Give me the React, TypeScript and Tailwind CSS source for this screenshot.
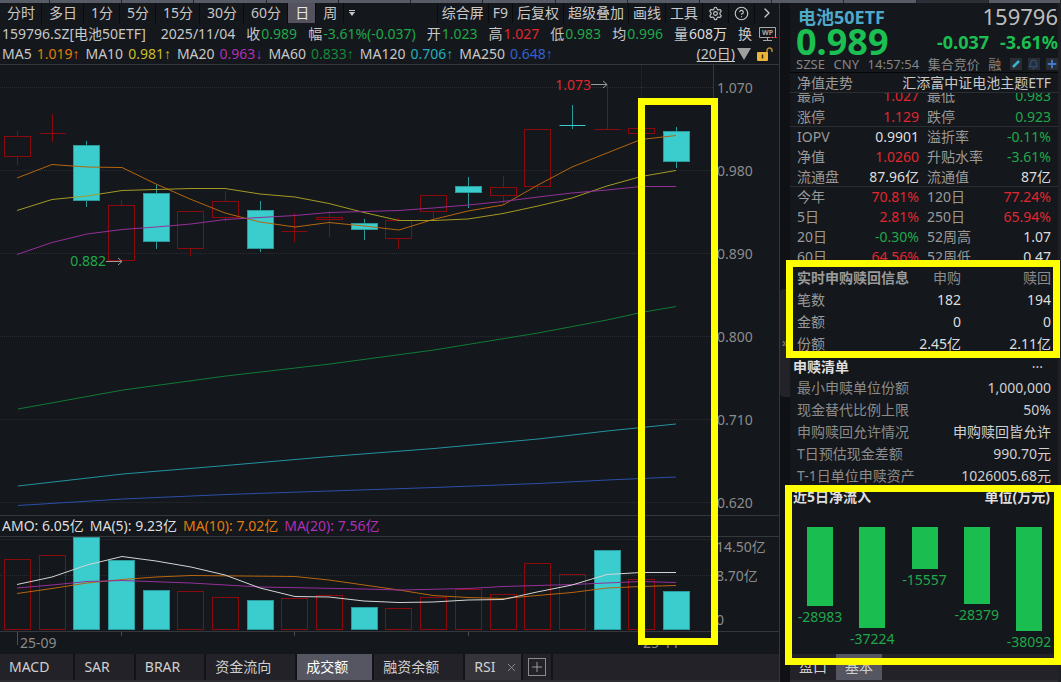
import { useState } from 'react';
import { Bell, ChevronRight, CircleHelp, Plus, Settings, X } from 'lucide-react';

type Candle = { up: boolean; top: number; bottom: number; high: number; low: number; vol: number };

const periods = ['分时', '多日', '1分', '5分', '15分', '30分', '60分', '日', '周'];
const tools = ['综合屏', 'F9', '后复权', '超级叠加', '画线', '工具'];
const indicators = ['MACD', 'SAR', 'BRAR', '资金流向', '成交额', '融资余额'];

const GREEN = 'text-[#1fa84a]';
const RED = 'text-[#e0262f]';
const WHITE = 'text-[#dedede]';

const quotes = [
  { label: '收', value: '0.989', color: GREEN },
  { label: '幅', value: '-3.61%(-0.037)', color: GREEN },
  { label: '开', value: '1.023', color: GREEN },
  { label: '高', value: '1.027', color: RED },
  { label: '低', value: '0.983', color: GREEN },
  { label: '均', value: '0.996', color: GREEN },
  { label: '量', value: '608万', color: WHITE },
];

const averages = [
  { label: 'MA5', value: '1.019', arrow: '↑', color: 'text-[#e07c0c]' },
  { label: 'MA10', value: '0.981', arrow: '↑', color: 'text-[#c9bd26]' },
  { label: 'MA20', value: '0.963', arrow: '↓', color: 'text-[#b02fb5]' },
  { label: 'MA60', value: '0.833', arrow: '↑', color: 'text-[#118a3c]' },
  { label: 'MA120', value: '0.706', arrow: '↑', color: 'text-[#22adbd]' },
  { label: 'MA250', value: '0.648', arrow: '↑', color: 'text-[#3560cf]' },
];

const candles: Candle[] = [
  { up: true, top: 136, bottom: 156, high: 131, low: 164, vol: 559 },
  { up: true, top: 133, bottom: 133, high: 114, low: 141, vol: 555 },
  { up: false, top: 145, bottom: 200, high: 141, low: 206, vol: 537 },
  { up: true, top: 205, bottom: 260, high: 200, low: 260, vol: 560 },
  { up: false, top: 193, bottom: 241, high: 185, low: 248, vol: 590 },
  { up: true, top: 211, bottom: 248, high: 211, low: 255, vol: 591 },
  { up: true, top: 201, bottom: 217, high: 191, low: 221, vol: 597 },
  { up: false, top: 210, bottom: 248, high: 201, low: 251, vol: 600 },
  { up: true, top: 231, bottom: 231, high: 213, low: 241, vol: 598 },
  { up: true, top: 217, bottom: 219, high: 211, low: 236, vol: 595 },
  { up: false, top: 223, bottom: 229, high: 219, low: 239, vol: 607 },
  { up: true, top: 220, bottom: 238, high: 218, low: 248, vol: 608 },
  { up: true, top: 195, bottom: 211, high: 195, low: 219, vol: 597 },
  { up: false, top: 186, bottom: 192, high: 177, low: 207, vol: 589 },
  { up: true, top: 187, bottom: 195, high: 176, low: 203, vol: 594 },
  { up: true, top: 129, bottom: 186, high: 129, low: 189, vol: 563 },
  { up: false, top: 125, bottom: 125, high: 105, low: 128, vol: 574 },
  { up: true, top: 129, bottom: 129, high: 84, low: 129, vol: 550 },
  { up: true, top: 128, bottom: 133, high: 128, low: 133, vol: 579 },
  { up: false, top: 131, bottom: 161, high: 127, low: 167, vol: 591 },
];

// turnover bars take their own colour, it differs from the candle on some days
const filledVolume = [2, 3, 4, 7, 10, 17, 19];

const priceLines = [
  { color: '#b5660f', points: '17,178 52,164.5 87,167 122,167.5 156,184 190,199 225,213 260,222 295,227 329,222.5 364,226 399,230 433,219.5 468,211 503,205 538,185 572,167 607,153 641,139.5 676,135.5' },
  { color: '#a39a24', points: '17,210.5 52,199.5 87,196 122,190.5 156,189.5 191,188.5 225,188.5 260,194 295,197 329,203.5 364,212.5 399,220.5 433,220.5 468,219 503,213.5 538,206 572,198 607,186 641,176.5 676,170.5' },
  { color: '#94309a', points: '17,254.5 52,242.5 87,234 122,229.5 156,227 191,224 225,219.5 260,217.5 295,215.5 329,212.5 364,211.5 399,210.5 433,208 468,205 503,201.5 538,197 572,193 607,190 641,186.5 676,186.5' },
  { color: '#107a36', points: '18,409 123,390 226,376 330,364 434,350 538,333 607,320 641,312.5 676,306.5' },
  { color: '#2393a0', points: '18,486 123,474 226,465.5 330,456.5 434,448.5 538,439 607,431 676,424' },
  { color: '#2b4fa8', points: '18,505.5 123,499 226,494.5 330,491 434,487.5 538,483.5 607,480 676,477' },
];

const volumeLines = [
  { color: '#b5660f', points: '17,593.5 52,588.5 87,583 122,579.5 156,577 191,575.5 295,576.5 329,580 364,585 399,590 433,595.5 468,597.5 503,598.5 537,595.5 572,592.5 607,588 641,586.5 676,585.5' },
  { color: '#94309a', points: '17,588 52,585 87,581.5 122,580.5 191,583 260,587 364,589 399,590 468,588.5 503,586.5 572,584.5 641,581.5 676,582.5' },
  { color: '#d4d4d4', points: '17,584.5 52,577 87,565 122,556.5 156,561 191,567 225,575 260,588 295,596.5 329,597 364,601 399,602.5 433,602 468,600 503,599.5 537,592 572,585 607,574.5 641,572.5 676,572.5' },
];

const priceTicks = [
  { y: 88, text: '1.070' },
  { y: 171, text: '0.980' },
  { y: 254, text: '0.890' },
  { y: 337, text: '0.800' },
  { y: 420, text: '0.710' },
  { y: 503, text: '0.620' },
];

const stats = [
  { cells: ['最高', '1.027', '最低', '0.983'], a: RED, b: GREEN, line: false },
  { cells: ['涨停', '1.129', '跌停', '0.923'], a: RED, b: GREEN, line: true },
  { cells: ['IOPV', '0.9901', '溢折率', '-0.11%'], a: WHITE, b: GREEN, line: false },
  { cells: ['净值', '1.0260', '升贴水率', '-3.61%'], a: RED, b: GREEN, line: false },
  { cells: ['流通盘', '87.96亿', '流通值', '87亿'], a: WHITE, b: WHITE, line: true },
  { cells: ['今年', '70.81%', '120日', '77.24%'], a: RED, b: RED, line: false },
  { cells: ['5日', '2.81%', '250日', '65.94%'], a: RED, b: RED, line: false },
  { cells: ['20日', '-0.30%', '52周高', '1.07'], a: GREEN, b: WHITE, line: false },
  { cells: ['60日', '64.56%', '52周低', '0.47'], a: RED, b: WHITE, line: false },
];

const redemption = [
  ['笔数', '182', '194'],
  ['金额', '0', '0'],
  ['份额', '2.45亿', '2.11亿'],
];

const basket = [
  ['最小申赎单位份额', '1,000,000'],
  ['现金替代比例上限', '50%'],
  ['申购赎回允许情况', '申购赎回皆允许'],
  ['T日预估现金差额', '990.70元'],
  ['T-1日单位申赎资产', '1026005.68元'],
];

const flows = [-28983, -37224, -15557, -28379, -38092];
const maxFlow = Math.max(...flows.map(Math.abs));

const centerX = (i: number) => Math.round(17 + i * 34.68) + 0.5;

function Highlight({ className }: { className: string }) {
  return <div className={`absolute z-10 border-[7px] border-[#ffff00] pointer-events-none ${className}`} />;
}

function WindowStrip() {
  return (
    <div className="flex h-[3px] bg-[#565b66]">
      <span className="w-[50px] border-r border-[#22252a]" />
      {Array.from({ length: 14 }, (_, i) => (
        <span key={i} className={`flex-1 border-r border-[#22252a] ${i === 12 ? 'bg-[#2b2e34]' : ''}`} />
      ))}
    </div>
  );
}

function PriceChart() {
  return (
    <svg viewBox="0 65 779 450" className="block w-full" fontSize="14">
      {priceTicks.map(tick => (
        <g key={tick.text}>
          <line x1="0" x2="713" y1={tick.y - 0.5} y2={tick.y - 0.5} stroke="#292c30" strokeDasharray="1 1" />
          <text x="717" y={tick.y + 5} fill="#8b8b8b">{tick.text}</text>
        </g>
      ))}
      <line x1="641.5" x2="641.5" y1="65" y2="515" stroke="#292c30" strokeDasharray="1 1" />
      <line x1="713.5" x2="713.5" y1="65" y2="515" stroke="#34373c" />
      {candles.map((c, i) => {
        const x = centerX(i);
        const stroke = c.up ? '#8c0a0e' : '#2a9a9c';
        return (
          <g key={i} stroke={stroke} fill={c.up ? 'none' : '#3bcccd'}>
            <line x1={x} x2={x} y1={c.high} y2={c.top} />
            <line x1={x} x2={x} y1={c.bottom} y2={c.low + 1} />
            {c.top === c.bottom ? (
              <line x1={x - 13} x2={x + 13} y1={c.top + 0.5} y2={c.top + 0.5} stroke={c.up ? stroke : '#3bcccd'} />
            ) : (
              <rect x={x - 13} y={c.top + 0.5} width="26" height={c.bottom - c.top} />
            )}
          </g>
        );
      })}
      {priceLines.map(line => (
        <polyline key={line.color} points={line.points} fill="none" stroke={line.color} />
      ))}
      <text x="591" y="90" textAnchor="end" fill="#e0262f">1.073</text>
      <path d="M591 84.5h16m-4-3.5 4 3.5-4 3.5" fill="none" stroke="#9a9a9a" />
      <text x="106" y="266" textAnchor="end" fill="#1fa84a">0.882</text>
      <path d="M106 261.5h16m-4-3.5 4 3.5-4 3.5" fill="none" stroke="#9a9a9a" />
    </svg>
  );
}

function VolumeChart() {
  return (
    <svg viewBox="0 537 779 117" className="block w-full" fontSize="14">
      <line x1="0" x2="713" y1="539.5" y2="539.5" stroke="#292c30" strokeDasharray="1 1" />
      <line x1="0" x2="713" y1="575.5" y2="575.5" stroke="#292c30" strokeDasharray="1 1" />
      <line x1="713.5" x2="713.5" y1="537" y2="631" stroke="#34373c" />
      {candles.map((c, i) => {
        const filled = filledVolume.includes(i);
        return (
          <rect
            key={i}
            x={centerX(i) - 13}
            y={c.vol + 0.5}
            width="26"
            height={629 - c.vol}
            fill={filled ? '#3bcccd' : 'none'}
            stroke={filled ? '#2a9a9c' : '#8c0a0e'}
          />
        );
      })}
      {volumeLines.map(line => (
        <polyline key={line.color} points={line.points} fill="none" stroke={line.color} />
      ))}
      <line x1="0" x2="779" y1="631.5" y2="631.5" stroke="#34373c" />
      <path d="M17.5 632v13M121.5 632v4M294.5 632v4M468.5 632v4M641.5 632v13" stroke="#4a4d52" />
      <g fill="#8b8b8b">
        <text x="716" y="552">14.50亿</text>
        <text x="716" y="581">8.70亿</text>
        <text x="716" y="625">0</text>
        <text x="20" y="648">25-09</text>
        <text x="643" y="648">25-11</text>
      </g>
    </svg>
  );
}

export default function App() {
  const [period, setPeriod] = useState('日');
  const [indicator, setIndicator] = useState('成交额');
  const [sideTab, setSideTab] = useState('基本');

  return (
    <div className="min-h-screen flex flex-col bg-[#14171b] text-sm text-[#c8c8c8] whitespace-nowrap overflow-hidden font-['Noto_Sans','Noto_Sans_CJK_SC',sans-serif]">
      <WindowStrip />
      <div className="flex flex-1">
        <main className="flex-1 min-w-0 flex flex-col">
          <div className="flex h-5 leading-5">
            {periods.map(p => (
              <button
                key={p}
                onClick={() => setPeriod(p)}
                className={`pl-[7px] pr-[6px] border-r border-[#090b0d] cursor-pointer ${period === p ? 'bg-[#53525e] text-[#e6e6e6]' : 'hover:bg-[#25272d]'}`}
              >
                {p}
              </button>
            ))}
            <button className="flex items-center px-1 cursor-pointer" aria-label="更多周期">
              <svg width="9" height="9" viewBox="0 0 9 9" fill="#c8c8c8">
                <path d="M1 1h6v1H1zM1 3h6L4 7z" />
              </svg>
            </button>
            <div className="ml-auto flex">
              {tools.map(t => (
                <button key={t} className="px-1 border-l border-[#090b0d] cursor-pointer hover:bg-[#25272d]">{t}</button>
              ))}
              <button className="px-[5px] border-l border-[#090b0d] cursor-pointer" aria-label="设置">
                <Settings size={15} strokeWidth={1.8} />
              </button>
              <button className="px-[5px] border-l border-[#090b0d] cursor-pointer" aria-label="帮助">
                <CircleHelp size={15} strokeWidth={1.8} />
              </button>
              <button className="px-1 border-l border-[#090b0d] cursor-pointer" aria-label="展开">
                <ChevronRight size={16} strokeWidth={2} />
              </button>
            </div>
          </div>

          <div className="flex items-center h-[21px] pl-[2px] pr-[2px] gap-[11px]">
            <span className="mr-1">159796.SZ[电池50ETF]</span>
            <span>2025/11/04</span>
            {quotes.map(q => (
              <span key={q.label} className="flex gap-px">
                {q.label}
                <span className={q.color}>{q.value}</span>
              </span>
            ))}
            <span className="flex flex-1 items-center justify-between">
              换
              <svg className="shrink-0" width="18" height="16" viewBox="0 0 18 16" fill="none" stroke="#a8a8a8">
                <path d="M.5 1.5h16v10H.5zM4 14.5h9M8.5 12v2" />
                <text x="3" y="9" fontSize="7" fontWeight="700" fill="#a8a8a8" stroke="none">WP</text>
                <path d="M11 11.5h7" stroke="#e0262f" strokeDasharray="2 1" />
              </svg>
            </span>
          </div>

          <div className="flex items-center h-[21px] pl-[2px] pr-[6px] gap-[6px] border-b border-[#34373c]">
            {averages.map(ma => (
              <span key={ma.label} className="flex gap-[5px]">
                {ma.label}
                <span className={ma.color}>
                  {ma.value}
                  <span className="font-['Liberation_Sans',sans-serif]">{ma.arrow}</span>
                </span>
              </span>
            ))}
            <button className="ml-auto flex items-center gap-[2px] cursor-pointer">
              <span className="underline underline-offset-2">(20日)</span>
              <svg width="14" height="12" viewBox="0 0 14 12" fill="#a0a0a0">
                <path d="M0 0h14L7 12z" />
              </svg>
            </button>
            <svg width="16" height="14" viewBox="0 0 16 14" fill="none">
              <path d="M10 6V3.5a2.5 2.5 0 0 1 5 0V5" stroke="#b98a2c" strokeWidth="1.5" />
              <rect y="5" width="11" height="9" rx="1" fill="#edb43a" />
              <path d="M5.5 7.5v4" stroke="#3b2a08" strokeWidth="1.5" />
            </svg>
          </div>

          <div className="relative">
            <PriceChart />
            <div className="flex items-center gap-[6px] h-[22px] pl-[2px] border-y border-[#34373c] text-[#dedede]">
              <span>AMO: 6.05亿</span>
              <span>MA(5): 9.23亿</span>
              <span className="text-[#e07c0c]">MA(10): 7.02亿</span>
              <span className="text-[#b02fb5]">MA(20): 7.56亿</span>
            </div>
            <VolumeChart />
            <Highlight className="right-[61px] top-[33px] bottom-[9px] w-20" />
          </div>

          <div className="flex h-[26px] bg-[#222228] text-[#d0d0d0]">
            {indicators.map(name => (
              <button
                key={name}
                onClick={() => setIndicator(name)}
                className={`pl-[9px] pr-6 border-r-2 border-[#121317] cursor-pointer ${indicator === name ? 'bg-[#565662] text-white' : ''}`}
              >
                {name}
              </button>
            ))}
            <div className="flex items-center bg-[#35343a] pl-[9px] pr-[3px] gap-[10px] border-r-2 border-[#121317]">
              <button className="cursor-pointer">RSI</button>
              <button className="cursor-pointer" aria-label="关闭RSI">
                <X size={13} strokeWidth={1.8} className="text-[#8b8b8b]" />
              </button>
            </div>
            <button className="px-[5px] border-r-2 border-[#121317] cursor-pointer" aria-label="添加指标">
              <span className="flex items-center justify-center size-[18px] border border-[#8b8b8b]">
                <Plus size={16} strokeWidth={1.5} className="text-[#9a9a9a]" />
              </span>
            </button>
          </div>
          <div className="flex-1 bg-[#2d2c31]" />
        </main>

        <aside className="flex w-[282px] shrink-0">
          <div className="w-[11px] shrink-0 flex items-center border-l border-[#34373c] bg-[#0f1114]">
            <button className="w-full h-[108px] bg-[#222228] rounded-l-sm text-xs text-[#8b8b8b] cursor-pointer" aria-label="收起侧栏">»</button>
          </div>
          <div className="flex-1 min-w-0 flex flex-col border-r-[3px] border-[#1e2025]">
            <header className="pl-[6px]">
              <div className="flex items-center justify-between h-[27px]">
                <h1 className="text-lg font-bold leading-6 text-[#4fa9c9] pl-[2px]">电池50ETF</h1>
                <span className="text-[22px] text-[#bdbdbd]">159796</span>
              </div>
              <div className="flex items-center justify-between h-6 font-bold text-[#1bbf52]">
                <span className="text-4xl leading-6">0.989</span>
                <span className="flex gap-[11px] text-lg leading-6">
                  <span>-0.037</span>
                  <span>-3.61%</span>
                </span>
              </div>
              <div className="flex items-center justify-between h-[18px] pt-[2px] text-[13px] leading-4 text-[#868686]">
                <span>SZSE</span>
                <span>CNY</span>
                <span>14:57:54</span>
                <span>集合竞价</span>
                <span>融</span>
                <div className="flex gap-[6px]">
                  <button className="flex items-center justify-center size-3 bg-[#292c32] cursor-pointer" aria-label="编辑">
                    <svg width="10" height="10" viewBox="0 0 10 10" stroke="#37b6cf" strokeWidth="2.5">
                      <path d="M2 8 8 2" />
                    </svg>
                  </button>
                  <button className="flex items-center justify-center size-3 bg-[#292c32] cursor-pointer" aria-label="提醒">
                    <Bell size={11} strokeWidth={2} className="text-[#2f5f96]" />
                  </button>
                  <button className="flex items-center justify-center size-3 bg-[#292c32] cursor-pointer" aria-label="加入自选">
                    <Plus size={12} strokeWidth={4} className="text-[#3f78d0]" />
                  </button>
                </div>
              </div>
            </header>

            <div className="flex items-center justify-between h-[21px] px-[7px] border-t border-b border-t-[#050607] border-b-[#2a2d32]">
              <span className="text-[#9a9a9a]">净值走势</span>
              <span>汇添富中证电池主题ETF</span>
            </div>

            <div className="overflow-hidden">
              <table className="w-full table-fixed -mt-[7px]">
                <tbody>
                  {stats.map(row => (
                    <tr key={row.cells[0]} className={`h-5 leading-[19px] border-b ${row.line ? 'border-[#2a2d32]' : 'border-transparent'}`}>
                      <th scope="row" className="w-[58px] pl-[7px] text-left font-normal text-[#9a9a9a]">{row.cells[0]}</th>
                      <td className={`text-right ${row.a}`}>{row.cells[1]}</td>
                      <th scope="row" className="w-[68px] pl-2 text-left font-normal text-[#9a9a9a]">{row.cells[2]}</th>
                      <td className={`pr-[7px] text-right ${row.b}`}>{row.cells[3]}</td>
                    </tr>
                  ))}
                </tbody>
              </table>
            </div>

            <section className="relative">
              <table className="w-full table-fixed leading-[22px]">
                <thead className="text-[#8b8b8b]">
                  <tr>
                    <th className="w-[121px] pl-[7px] text-left font-bold text-[#9a9a9a]">实时申购赎回信息</th>
                    <th className="text-right font-normal">申购</th>
                    <th className="w-[97px] pr-[7px] text-right font-normal">赎回</th>
                  </tr>
                </thead>
                <tbody>
                  {redemption.map(([label, buy, sell]) => (
                    <tr key={label}>
                      <th scope="row" className="pl-[7px] text-left font-normal text-[#9a9a9a]">{label}</th>
                      <td className="text-right text-[#dedede]">{buy}</td>
                      <td className="pr-[7px] text-right text-[#dedede]">{sell}</td>
                    </tr>
                  ))}
                </tbody>
              </table>
              <Highlight className="-left-1 -right-[2px] -top-[7px] -bottom-[3px]" />
            </section>

            <section>
              <div className="flex justify-between h-[22px] leading-6 pl-[3px] pr-[15px]">
                <h2 className="font-bold text-[#dedede]">申赎清单</h2>
                <button className="h-4 leading-3 cursor-pointer" aria-label="更多清单">...</button>
              </div>
              <table className="w-full leading-[22px]">
                <tbody>
                  {basket.map(([label, value]) => (
                    <tr key={label}>
                      <th scope="row" className="pl-[7px] text-left font-normal text-[#8b8b8b]">{label}</th>
                      <td className="pr-[7px] text-right text-[#d0d0d0]">{value}</td>
                    </tr>
                  ))}
                </tbody>
              </table>
            </section>

            <section className="relative">
              <div className="flex justify-between h-5 leading-5 pl-[3px] pr-2 font-bold text-[#dedede]">
                <h2>近5日净流入</h2>
                <span>单位(万元)</span>
              </div>
              <div className="flex items-start h-[147px] pl-1 pr-[3px] pt-5">
                {flows.map(v => (
                  <div key={v} className="flex-1 flex flex-col items-center text-[#1fa84a]">
                    <div className="w-[26px] bg-[#19bd50]" style={{ height: (Math.abs(v) / maxFlow) * 104 }} />
                    <span className="leading-[22px]">{v}</span>
                  </div>
                ))}
              </div>
              <Highlight className="-left-[5px] -right-[3px] -top-[2px] -bottom-[11px]" />
            </section>

            <div className="flex h-[26px] bg-[#222228] text-[#d0d0d0]">
              {['盘口', '基本'].map(t => (
                <button
                  key={t}
                  onClick={() => setSideTab(t)}
                  className={`px-[9px] cursor-pointer ${sideTab === t ? 'bg-[#565662]' : ''}`}
                >
                  {t}
                </button>
              ))}
            </div>
            <div className="flex-1 bg-[#2d2c31]" />
          </div>
        </aside>
      </div>
    </div>
  );
}
